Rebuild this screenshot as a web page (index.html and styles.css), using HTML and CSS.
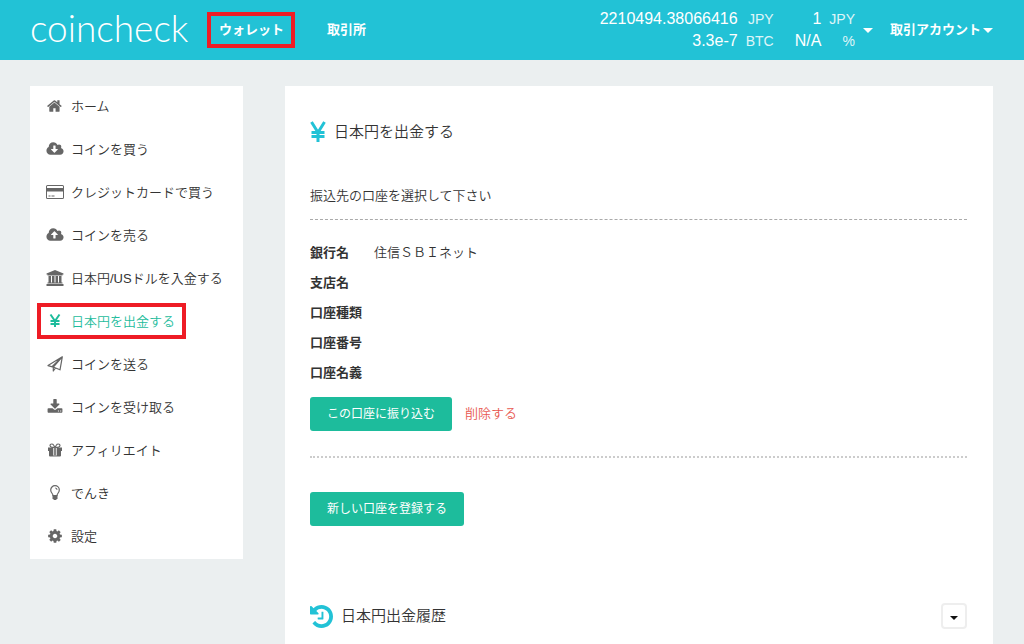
FILE: index.html
```html
<!DOCTYPE html>
<html lang="ja">
<head>
<meta charset="utf-8">
<meta name="viewport" content="width=device-width, initial-scale=1">
<title>日本円を出金する - coincheck</title>
<link rel="stylesheet" href="styles.css">
</head>
<body>
<header class="topbar">
  <a class="logo" href="#">coincheck</a>
  <nav class="topnav">
    <a class="topnav-link marked" href="#">ウォレット</a>
    <a class="topnav-link" href="#">取引所</a>
  </nav>
  <table class="balances">
    <tr><td>2210494.38066416</td><td class="unit">JPY</td><td class="second">1</td><td class="unit">JPY</td></tr>
    <tr><td>3.3e-7</td><td class="unit">BTC</td><td class="second">N/A</td><td class="unit">%</td></tr>
  </table>
  <button class="menu-button balance-toggle" type="button" aria-label="残高"><span class="caret"></span></button>
  <button class="menu-button" type="button">取引アカウント<span class="caret"></span></button>
</header>

<div class="page">
  <nav class="sidebar">
    <ul class="menu">
      <li><a class="menu-link" href="#"><span class="slot"><svg class="icon" viewBox="0 0 1792 1792"><path d="M1408 992v480q0 26-19 45t-45 19h-384v-384h-256v384h-384q-26 0-45-19t-19-45v-480q0-1 .5-3t.5-3l575-474 575 474q1 2 1 6zm223-69l-62 74q-8 9-21 11h-3q-13 0-21-7l-692-577-692 577q-12 8-24 7-13-2-21-11l-62-74q-8-10-7-23.5t11-21.5l719-599q32-26 76-26t76 26l244 204v-195q0-14 9-23t23-9h192q14 0 23 9t9 23v408l219 182q10 8 11 21.5t-7 23.5z"/></svg></span>ホーム</a></li>
      <li><a class="menu-link" href="#"><span class="slot"><svg class="icon wide" viewBox="-64 0 1920 1792"><path d="M1216 928q0-14-9-23t-23-9h-224v-352q0-13-9.500-22.500t-22.500-9.500h-192q-13 0-22.500 9.500t-9.500 22.500v352h-224q-13 0-22.500 9.500t-9.500 22.500q0 14 9 23l352 352q9 9 23 9t23-9l351-351q10-12 10-24zm640 224q0 159-112.500 271.500t-271.500 112.500h-1088q-185 0-316.500-131.500t-131.500-316.500q0-130 70-240t188-165q-2-30-2-43 0-212 150-362t362-150q156 0 285.500 87t188.500 231q71-62 166-62 106 0 181 75t75 181q0 76-41 138 130 31 213.500 135.500t83.500 238.500z"/></svg></span>コインを買う</a></li>
      <li><a class="menu-link" href="#"><span class="slot"><svg class="icon wide" viewBox="0 0 18 16"><path fill-rule="evenodd" d="M1.500 1h15Q18 1 18 2.500v11q0 1.500-1.500 1.500h-15Q0 15 0 13.500v-11Q0 1 1.500 1zM1 2.500V4h16V2.500Q17 2 16.500 2h-15Q1 2 1 2.500zM1 7.500v6q0 .5.5.5h15q.5 0 .5-.5v-6zM2.500 11.500h2v1h-2zm3 0h3v1h-3z"/></svg></span>クレジットカードで買う</a></li>
      <li><a class="menu-link" href="#"><span class="slot"><svg class="icon wide" viewBox="-64 0 1920 1792"><path d="M1216 864q0-14-9-23l-352-352q-9-9-23-9t-23 9l-351 351q-10 12-10 24 0 14 9 23t23 9h224v352q0 13 9.500 22.500t22.500 9.500h192q13 0 22.500-9.500t9.500-22.500v-352h224q13 0 22.500-9.500t9.500-22.500zm640 288q0 159-112.500 271.500t-271.500 112.500h-1088q-185 0-316.500-131.500t-131.500-316.500q0-130 70-240t188-165q-2-30-2-43 0-212 150-362t362-150q156 0 285.500 87t188.500 231q71-62 166-62 106 0 181 75t75 181q0 76-41 138 130 31 213.500 135.500t83.500 238.500z"/></svg></span>コインを売る</a></li>
      <li><a class="menu-link" href="#"><span class="slot"><svg class="icon wide" viewBox="0 0 18 16"><path d="M9 0l8.500 3.500v1H16.500v1h-15v-1H.5v-1zM2.500 6H5v6.500h1V6h2.500v6.500h1V6H12v6.500h1V6h2.500v6.500h1v1h-15v-1h1zM.5 14h17v2H.5z"/></svg></span>日本円/USドルを入金する</a></li>
      <li><a class="menu-link active marked" href="#"><span class="slot"><svg class="icon" viewBox="0 0 16 16"><path class="line" d="M3.500 1.500L8 8l4.500-6.500M8 8v6M3.500 8h9M3.500 11h9"/></svg></span>日本円を出金する</a></li>
      <li><a class="menu-link" href="#"><span class="slot"><svg class="icon" viewBox="0 0 16 16"><path class="thin" d="M1 9.600L15.300.8 13 13.800 8.600 12 6.300 15v-3.900zM6.300 11.100L15.300.8 5 10.700M6.300 11.100l2.300.9"/></svg></span>コインを送る</a></li>
      <li><a class="menu-link" href="#"><span class="slot"><svg class="icon" viewBox="0 0 1792 1792"><path d="M1344 1344q0-26-19-45t-45-19-45 19-19 45 19 45 45 19 45-19 19-45zm256 0q0-26-19-45t-45-19-45 19-19 45 19 45 45 19 45-19 19-45zm128-224v320q0 40-28 68t-68 28h-1472q-40 0-68-28t-28-68v-320q0-40 28-68t68-28h465l135 136q58 56 136 56t136-56l136-136h464q40 0 68 28t28 68zm-325-569q17 41-14 70l-448 448q-18 19-45 19t-45-19l-448-448q-31-29-14-70 17-39 59-39h256v-448q0-26 19-45t45-19h256q26 0 45 19t19 45v448h256q42 0 59 39z"/></svg></span>コインを受け取る</a></li>
      <li><a class="menu-link" href="#"><span class="slot"><svg class="icon" viewBox="0 0 16 16"><path d="M1 5.500h5.300V9H1zM9.700 5.500H15V9H9.700zM2 9h4.300v5.500H3q-1 0-1-1zM9.700 9H14v4.500q0 1-1 1H9.700zM7.200 5.500h1.600v7.700H7.200zM6.300 13.600h3.400v.9H6.300z"/><path class="thin" d="M7.500 5.300H5Q3 5.100 3 3.600 3 2 4.700 2 6 2 6.700 3.200L8 5.300l1.300-2.100Q10 2 11.300 2 13 2 13 3.600q0 1.500-2 1.700H8.500"/></svg></span>アフィリエイト</a></li>
      <li><a class="menu-link" href="#"><span class="slot"><svg class="icon" viewBox="0 0 16 16"><path class="thin" d="M6 10.500C6 8.500 3.700 7.800 3.700 5A4.300 4.300 0 0 1 12.300 5C12.300 7.800 10 8.500 10 10.500zM8.200 3Q10 3.200 10 4.800"/><path d="M5.500 10h5v3.300L9 15H7l-1.500-1.700z"/></svg></span>でんき</a></li>
      <li><a class="menu-link" href="#"><span class="slot"><svg class="icon" viewBox="0 0 1792 1792"><path d="M1152 896q0-106-75-181t-181-75-181 75-75 181 75 181 181 75 181-75 75-181zm512-109v222q0 12-8 23t-20 13l-185 28q-19 54-39 91 35 50 107 138 10 12 10 25t-9 23q-27 37-99 108t-94 71q-12 0-26-9l-138-108q-44 23-91 38-16 136-29 186-7 28-36 28h-222q-14 0-24.500-8.500t-11.500-21.500l-28-184q-49-16-90-37l-141 107q-10 9-25 9-14 0-25-11-126-114-165-168-7-10-7-23 0-12 8-23 15-21 51-66.500t54-70.500q-27-50-41-99l-183-27q-13-2-21-12.500t-8-23.500v-222q0-12 8-23t19-13l186-28q14-46 39-92-40-57-107-138-10-12-10-24 0-10 9-23 26-36 98.500-107.500t94.500-71.500q13 0 26 10l138 107q44-23 91-38 16-136 29-186 7-28 36-28h222q14 0 24.500 8.500t11.500 21.500l28 184q49 16 90 37l142-107q9-9 24-9 13 0 25 10 129 119 165 170 7 8 7 22 0 12-8 23-15 21-51 66.500t-54 70.500q26 50 41 98l183 28q13 2 21 12.500t8 23.500z"/></svg></span>設定</a></li>
    </ul>
  </nav>

  <main class="panel">
    <h1 class="title"><svg class="title-icon yen" viewBox="0 0 16 22"><path class="line" d="M1.500 1L8 11.500 14.500 1M8 11v10M1.500 11.500h13M1.500 15.500h13"/></svg>日本円を出金する</h1>
    <p class="lead">振込先の口座を選択して下さい</p>
    <section class="account">
      <dl class="details">
        <dt>銀行名</dt><dd>住信ＳＢＩネット</dd>
        <dt>支店名</dt><dd></dd>
        <dt>口座種類</dt><dd></dd>
        <dt>口座番号</dt><dd></dd>
        <dt>口座名義</dt><dd></dd>
      </dl>
      <div class="actions">
        <button class="primary" type="button">この口座に振り込む</button>
        <a class="delete" href="#">削除する</a>
      </div>
    </section>
    <button class="primary" type="button">新しい口座を登録する</button>
    <div class="history">
      <h2 class="title"><svg class="title-icon" viewBox="128 128 1536 1536"><path d="M1664 896q0 156-61 298t-164 245-245 164-298 61q-172 0-327-72.500t-264-204.500q-7-10-6.500-22.500t8.500-20.500l137-138q10-9 25-9 16 2 23 12 73 95 179 147t225 52q104 0 198.500-40.500t163.500-109.500 109.500-163.500 40.500-198.500-40.500-198.500-109.500-163.500-163.500-109.500-198.500-40.500q-98 0-188 35.500t-160 101.500l137 138q31 30 14 69-17 40-59 40h-448q-26 0-45-19t-19-45v-448q0-42 40-59 39-17 69 14l130 129q107-101 244.500-156.500t284.500-55.500q156 0 298 61t245 164 164 245 61 298zm-640-288v448q0 14-9 23t-23 9h-320q-14 0-23-9t-9-23v-64q0-14 9-23t23-9h224v-352q0-14 9-23t23-9h64q14 0 23 9t9 23z"/></svg>日本円出金履歴</h2>
      <button class="expand" type="button" aria-label="履歴を開く"><span class="caret"></span></button>
    </div>
  </main>
</div>
</body>
</html>
```
FILE: styles.css
```css
* {
  box-sizing: border-box;
}

body {
  margin: 0;
  min-height: 100vh;
  display: flex;
  flex-direction: column;
  background: #ebeff0;
  color: #333;
  font: 350 13px/20px "Liberation Sans", "Noto Sans CJK JP", sans-serif;
}

a {
  color: inherit;
  text-decoration: none;
}

button {
  font: inherit;
  cursor: pointer;
}

/* Top bar */
.topbar {
  display: flex;
  align-items: center;
  min-height: 60px;
  padding: 0 31px 0 30px;
  background: #22c2d6;
  color: #fff;
}

.logo {
  width: 177px;
  padding-bottom: 4px;
  font: 300 37px/56px Lato, sans-serif;
}

.topnav {
  display: flex;
  gap: 20px;
  flex: 1;
  font-weight: 700;
  white-space: nowrap;
}

.topnav-link {
  padding: 4px 7px 4px 8px;
  border: 4px solid transparent;
}

.marked {
  border-color: #ee1c25;
}

.balances {
  border-collapse: collapse;
  font-size: 16px;
  line-height: 22px;
  text-align: right;
  white-space: nowrap;
}

.balances td {
  padding: 0;
}

.balances .unit {
  padding-left: 8px;
  font-size: 14px;
  opacity: 0.85;
}

.balances .second {
  padding-left: 21px;
}

.menu-button {
  display: flex;
  align-items: center;
  gap: 2px;
  padding: 0;
  border: 0;
  background: none;
  color: #fff;
  font-weight: 700;
  white-space: nowrap;
}

.balance-toggle {
  margin: 0 17px 0 8px;
}

.caret {
  border: 5px solid transparent;
  border-top-color: currentColor;
  border-bottom: 0;
}

/* Page columns */
.page {
  flex: 1;
  display: flex;
  gap: 42px;
  padding: 26px 31px 0 30px;
}

.sidebar {
  flex: 0 0 213px;
  align-self: flex-start;
  background: #fff;
}

.menu {
  margin: 0;
  padding: 0;
  list-style: none;
}

.menu li {
  display: flex;
  padding: 2px 7px 5px;
}

.menu-link {
  display: flex;
  align-items: center;
  gap: 7px;
  padding: 5px 7px 3px 5px;
  border: 4px solid transparent;
  white-space: nowrap;
}

.menu-link.active {
  color: #1dbc9c;
}

.menu-link.marked {
  border-color: #ee1c25;
}

.slot {
  display: flex;
  justify-content: center;
  width: 18px;
  padding-bottom: 3px;
  color: #666;
}

.active .slot {
  color: inherit;
}

.icon {
  width: 16px;
  height: 16px;
  fill: currentColor;
}

.wide {
  width: 18px;
}

.line {
  fill: none;
  stroke: currentColor;
  stroke-width: 2;
}

.thin {
  fill: none;
  stroke: currentColor;
  stroke-width: 1.2;
  stroke-linejoin: round;
}

/* Main panel */
.panel {
  flex: 1;
  padding: 34px 26px 12px 25px;
  background: #fff;
}

.title {
  display: flex;
  align-items: center;
  gap: 8px;
  margin: 0;
  font-size: 15px;
  font-weight: 350;
  line-height: 24px;
}

.title-icon {
  width: 23px;
  height: 23px;
  fill: #22c2d6;
  color: #22c2d6;
}

.yen {
  width: 16px;
  height: 22px;
}

.yen .line {
  stroke-width: 3;
}

.lead {
  margin: 42px 0 0;
  padding-bottom: 13px;
  border-bottom: 1px dashed #aaa;
}

.account {
  margin-bottom: 34px;
  padding: 18px 0 25px;
  border-bottom: 2px dotted #ccc;
}

.details {
  display: grid;
  grid-template-columns: 64px 1fr;
  margin: 0 0 9px;
  line-height: 30px;
}

.details dt {
  color: #333;
  font-weight: 700;
}

.details dd {
  margin: 0;
}

.actions {
  display: flex;
  align-items: center;
  gap: 13px;
}

.primary {
  padding: 7px 17px;
  border: 0;
  border-radius: 3px;
  background: #1dbc9c;
  color: #fff;
  font-size: 12px;
  font-weight: 400;
  line-height: 20px;
}

.delete {
  color: #e8574f;
}

.history {
  display: flex;
  align-items: center;
  justify-content: space-between;
  margin-top: 77px;
}

.expand {
  display: flex;
  align-items: center;
  justify-content: center;
  width: 26px;
  height: 26px;
  padding: 4px 0 0;
  border: 2px solid #eee;
  border-radius: 4px;
  background: #fff;
  color: #111;
}

.expand .caret {
  border-width: 4px 4px 0;
}
```
